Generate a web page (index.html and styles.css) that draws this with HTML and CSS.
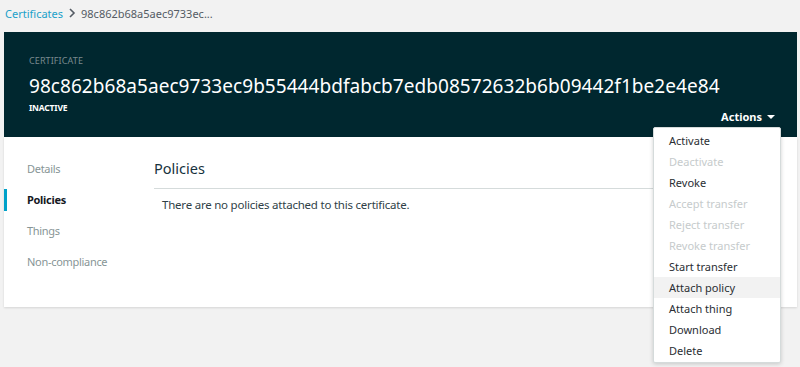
FILE: index.html
```html
<!DOCTYPE html><html lang="en">
<head>
    <meta charset="UTF-8">
    <title>Certificate</title>
    <link rel="stylesheet" href="styles.css">
</head>
<body>
<div class="breadcrumb">
    <a href="#">Certificates</a>
    <svg class="crumb-sep" width="8" height="10" viewBox="0 0 8 10"><path d="M2 1l4 4-4 4" fill="none" stroke="#545b64" stroke-width="1.6"/></svg>
    <span>98c862b68a5aec9733ec...</span>
</div>

<div class="page">
    <div class="hero">
        <div class="hero-info">
            <div class="label">CERTIFICATE</div>
            <div class="cert-id">98c862b68a5aec9733ec9b55444bdfabcb7edb08572632b6b09442f1be2e4e84</div>
            <div class="status">INACTIVE</div>
        </div>
        <button class="actions-btn">Actions <span class="caret"></span></button>
    </div>

    <div class="panel">
        <ul class="side-nav">
            <li>Details</li>
            <li class="active">Policies</li>
            <li>Things</li>
            <li>Non-compliance</li>
        </ul>
        <div class="content">
            <h2>Policies</h2>
            <p>There are no policies attached to this certificate.</p>
        </div>
    </div>
</div>

<ul class="menu">
    <li>Activate</li>
    <li class="disabled">Deactivate</li>
    <li>Revoke</li>
    <li class="disabled">Accept transfer</li>
    <li class="disabled">Reject transfer</li>
    <li class="disabled">Revoke transfer</li>
    <li>Start transfer</li>
    <li class="hover">Attach policy</li>
    <li>Attach thing</li>
    <li>Download</li>
    <li>Delete</li>
</ul>
</body>
</html>
```

FILE: styles.css
```css
body {
    margin: 0;
    background: #f2f2f2;
    font-family: "Noto Sans", "Open Sans", sans-serif;
    color: #444;
    position: relative;
    height: 367px;
    overflow: hidden;
}

.breadcrumb {
    height: 32px;
    padding-left: 5px;
    display: flex;
    align-items: center;
    gap: 5px;
    font-size: 11px;
    color: #545b64;
    padding-bottom: 6px;
    box-sizing: border-box;
}

.breadcrumb a {
    color: #1ba1c9;
    text-decoration: none;
}

.page {
    margin: 0 3px 0 4px;
}

.hero {
    background: #00272f;
    color: white;
    height: 105px;
    box-sizing: border-box;
    padding: 29px 22px 13px 25px;
    display: flex;
    justify-content: space-between;
    align-items: flex-end;
}

.label {
    font-size: 9px;
    color: #7a8a8e;
    letter-spacing: 0.1px;
}

.cert-id {
    font-size: 19px;
    margin-top: 6px;
    letter-spacing: 0.05px;
}

.status {
    font-size: 8.5px;
    font-weight: bold;
    margin-top: 3px;
    letter-spacing: -0.2px;
    padding-bottom: 11px;
}

.actions-btn {
    background: none;
    border: none;
    color: white;
    font-family: inherit;
    font-size: 11px;
    font-weight: bold;
    padding: 0;
    display: flex;
    align-items: center;
    gap: 5px;
}

.caret {
    width: 0;
    height: 0;
    border-left: 4px solid transparent;
    border-right: 4px solid transparent;
    border-top: 4px solid white;
}

.panel {
    background: white;
    height: 170px;
    display: flex;
    box-shadow: 0 1px 2px rgba(0, 0, 0, 0.12);
}

.side-nav {
    list-style: none;
    margin: 0;
    padding: 21px 0 0;
    width: 150px;
    flex-shrink: 0;
}

.side-nav li {
    height: 31px;
    line-height: 22px;
    padding-left: 20px;
    font-size: 11px;
    letter-spacing: -0.3px;
    color: #879596;
    border-left: 3px solid transparent;
    box-sizing: border-box;
}

.side-nav li.active {
    color: #16191f;
    font-weight: bold;
    border-left-color: #00a1c9;
    height: 22px;
    margin: 0 0 9px;
}

.content {
    flex: 1;
    padding-top: 21px;
    margin-right: 16px;
}

.content h2 {
    margin: 0;
    font-size: 14.5px;
    font-weight: normal;
    color: #16323d;
    padding-bottom: 10px;
    border-bottom: 1px solid #d5dbdb;
}

.content p {
    margin: 8px 0 0 8px;
    font-size: 11.5px;
    letter-spacing: -0.22px;
    color: #2f3f47;
}

.menu {
    position: absolute;
    top: 127px;
    left: 653px;
    width: 128px;
    height: 236px;
    box-sizing: border-box;
    margin: 0;
    padding: 2px 0 0;
    list-style: none;
    background: white;
    border: 1px solid #d5dbdb;
    border-radius: 2px;
    box-shadow: 0 1px 4px rgba(0, 0, 0, 0.18);
}

.menu li {
    height: 21px;
    line-height: 21px;
    padding-left: 15px;
    font-size: 11px;
    color: #2a2e33;
}

.menu li.disabled {
    color: #c6cbcc;
}

.menu li.hover {
    background: #f2f2f2;
}
```
